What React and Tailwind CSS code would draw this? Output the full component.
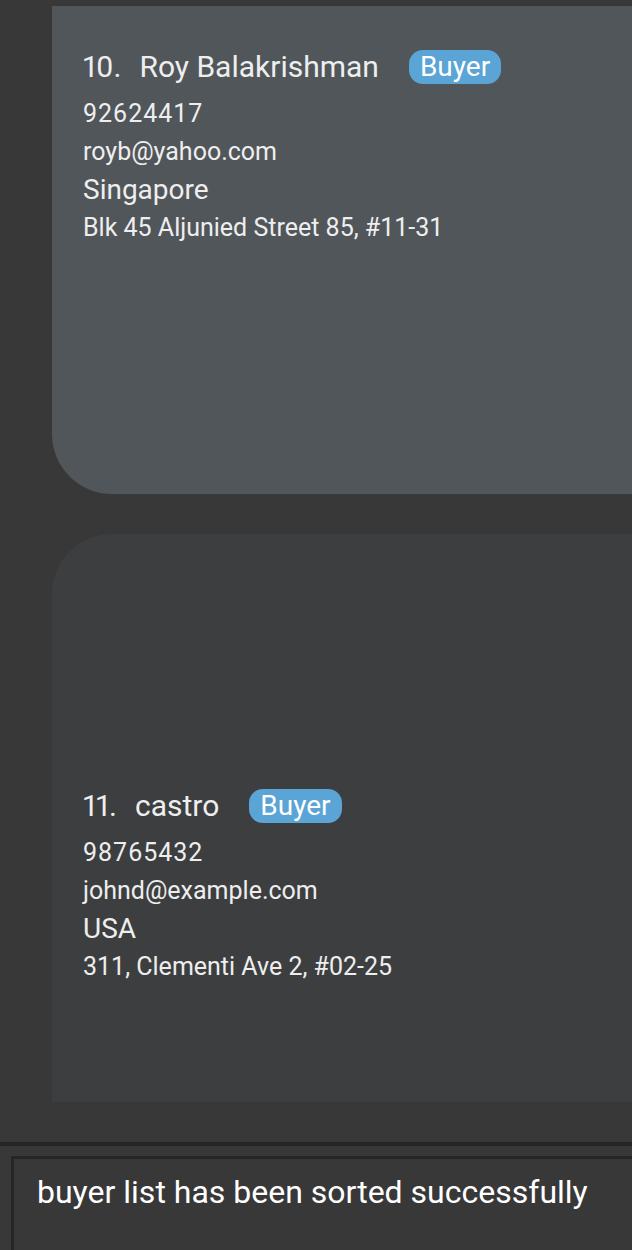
import React from "react";

const font = { fontFamily: "Roboto, 'Liberation Sans', sans-serif" };

function Card({ idx, name, phone, email, country, address, className, contentClass }) {
  return (
    <div className={className}>
      <div className={contentClass}>
        <div className="flex items-center h-[34px]">
          <span className="text-[30px] leading-none text-[#eeeeee] proportional-nums">{idx}</span>
          <span className="ml-[18px] text-[30px] leading-none text-[#eeeeee]">{name}</span>
          <span className="ml-[30px] h-[34px] px-[11px] rounded-[14px] bg-[#5ba4d6] text-[28px] leading-[34px] text-white">Buyer</span>
        </div>
        <div className="mt-[11px] text-[25px] leading-[38px] tracking-[1px] text-[#eeeeee]">{phone}</div>
        <div className="text-[25px] leading-[38px] text-[#eeeeee]">{email}</div>
        <div className="text-[28px] leading-[38px] text-[#eeeeee]">{country}</div>
        <div className="text-[25px] leading-[38px] text-[#eeeeee]">{address}</div>
      </div>
    </div>
  );
}

export default function App() {
  return (
    <div className="w-[632px] h-[1250px] bg-[#383838] overflow-hidden flex flex-col" style={font}>
      <div className="pt-[6px] pl-[52px] flex flex-col gap-[40px]">
        <Card
          idx="10."
          name="Roy Balakrishman"
          phone="92624417"
          email="royb@yahoo.com"
          country="Singapore"
          address="Blk 45 Aljunied Street 85, #11-31"
          className="h-[488px] bg-[#51565a] rounded-bl-[60px]"
          contentClass="pt-[44px] pl-[31px]"
        />
        <Card
          idx="11."
          name="castro"
          phone="98765432"
          email="johnd@example.com"
          country="USA"
          address="311, Clementi Ave 2, #02-25"
          className="h-[568px] bg-[#3d3e40] rounded-tl-[60px]"
          contentClass="pt-[255px] pl-[31px]"
        />
      </div>
      <div className="mt-[40px] h-[4px] bg-[#262626]" />
      <div className="mt-[10px] ml-[11px] flex-1 border-l-[3px] border-t-[3px] border-[#262626] pl-[23px] pt-[13px]">
        <div className="text-[32px] leading-[40px] text-white">buyer list has been sorted successfully</div>
      </div>
    </div>
  );
}
